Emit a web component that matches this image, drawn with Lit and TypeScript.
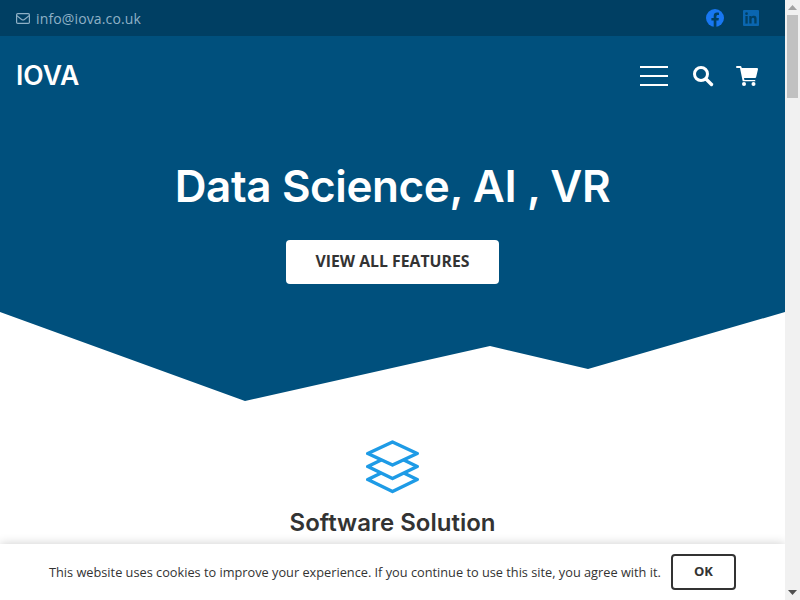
import { LitElement, html, css } from "lit";
import { customElement } from "lit/decorators.js";

@customElement("app-root")
export class AppRoot extends LitElement {
  static styles = css`
    :host { display: block; width: 800px; height: 600px; overflow: hidden; background: #fff; font-family: "Open Sans", sans-serif; color: #333; }
    * { box-sizing: border-box; }
    .shell { display: grid; grid-template-columns: 785px 15px; height: 600px; }
    .page { position: relative; height: 600px; overflow: hidden; }
    .topbar { height: 36px; background: #003f63; display: flex; align-items: center; justify-content: space-between; padding: 0 26px 0 16px; }
    .mail { display: flex; align-items: center; gap: 6px; color: #8fb1c6; font-size: 14px; letter-spacing: 0.14px; }
    .social { display: flex; align-items: center; gap: 19px; }
    .social svg { display: block; }
    .hero { background: #00507d; height: 276px; display: flex; flex-direction: column; }
    .nav { display: flex; align-items: center; justify-content: space-between; height: 80px; padding: 0 27px 0 16px; }
    .logo { font-family: Inter, sans-serif; font-weight: 600; font-size: 26.5px; color: #fff; margin-top: -2px; }
    .tools { display: flex; align-items: center; }
    .burger { display: flex; flex-direction: column; gap: 7px; width: 28px; margin-right: 25px; }
    .burger span { display: block; height: 2px; background: #fff; }
    .search { margin-right: 22px; display: block; }
    .cart { display: block; }
    h1 { margin: 46px 0 0; text-align: center; font-family: Inter, sans-serif; font-weight: 600; font-size: 44px; line-height: 48px; color: #fff; letter-spacing: -0.4px; }
    .cta { align-self: center; margin-top: 30px; width: 213px; height: 44px; padding-bottom: 2px; background: #fff; border-radius: 4px; display: flex; align-items: center; justify-content: center; font-weight: 700; font-size: 15.8px; color: #333; }
    .divider { display: block; width: 785px; height: 89px; }
    .feature { display: flex; flex-direction: column; align-items: center; padding-top: 39px; }
    .feature svg { display: block; }
    h2 { margin: 13px 0 0; font-family: Inter, sans-serif; font-weight: 600; font-size: 24px; line-height: 32px; color: #333; }
    .cookie { position: absolute; left: 0; right: 0; bottom: 0; height: 56px; background: #fff; box-shadow: 0 0 10px rgba(0,0,0,.2); display: flex; align-items: center; padding: 0 49px; gap: 10px; }
    .cookie p { margin: 0; width: 612px; font-size: 12.76px; color: #333; white-space: nowrap; }
    .ok { width: 65px; height: 36px; border: 2px solid #333; border-radius: 4px; display: flex; align-items: center; justify-content: center; font-weight: 700; font-size: 13px; color: #333; flex: none; padding-bottom: 2px; }
    .bar { background: #f1f1f1; display: flex; flex-direction: column; align-items: center; height: 600px; }
    .arrow { height: 15px; display: flex; align-items: center; justify-content: center; flex: none; }
    .thumb { width: 11px; height: 83px; background: #c1c1c1; flex: none; }
    .track { flex: 1; }
  `;

  render() {
    return html`
      <div class="shell">
        <div class="page">
          <div class="topbar">
            <div class="mail">
              <svg width="14" height="11" viewBox="0 0 14 11" fill="none" stroke="#8fb1c6" stroke-width="1.2">
                <rect x=".6" y=".6" width="12.8" height="9.8" rx="1.2"/>
                <path d="M.8 2.6 5.6 6.4q1.4 1 2.8 0l4.8-3.8"/>
              </svg>
              <span>info@iova.co.uk</span>
            </div>
            <div class="social">
              <svg width="18" height="18" viewBox="0 0 18 18">
                <circle cx="9" cy="9" r="9" fill="#1877f2"/>
                <path d="M12.500 11.600 12.900 9H10.400V7.300c0-.7.350-1.400 1.450-1.400H13V3.700s-1-.2-2-.2C9 3.500 7.700 4.700 7.700 6.900V9H5.400v2.600h2.300V18h2.700v-6.400z" fill="#003f63"/>
              </svg>
              <svg width="16" height="16" viewBox="0 0 16 16">
                <rect width="16" height="16" rx="1" fill="#0a66b0"/>
                <rect x="2.400" y="6" width="2.300" height="7.600" fill="#003f63"/>
                <circle cx="3.550" cy="3.700" r="1.350" fill="#003f63"/>
                <path d="M6.300 6h2.200v1c.4-.7 1.300-1.200 2.400-1.200 2.300 0 2.700 1.500 2.700 3.500v4.300h-2.300V9.800c0-.9 0-2-1.300-2s-1.400 1-1.400 2v3.800H6.300z" fill="#003f63"/>
              </svg>
            </div>
          </div>
          <div class="hero">
            <div class="nav">
              <div class="logo">IOVA</div>
              <div class="tools">
                <div class="burger"><span></span><span></span><span></span></div>
                <svg class="search" width="21" height="21" viewBox="0 0 21 21" fill="none" stroke="#fff">
                  <circle cx="8" cy="8" r="6.500" stroke-width="3"/>
                  <path d="M13 13 18.500 18.500" stroke-width="3.400" stroke-linecap="round"/>
                </svg>
                <svg class="cart" width="22" height="20" viewBox="0 0 22 20">
                  <path d="M0 1a1 1 0 0 1 1-1h3.400c.5 0 .9.300 1 .8L5.800 2h15.200c.7 0 1.100.6 1 1.200l-1.900 8c-.1.500-.5.800-1 .8H8l.4 2h10c.7 0 1.100.6 1 1.200H6.700L4 2H1a1 1 0 0 1-1-1z" fill="#fff"/>
                  <circle cx="8" cy="18" r="2" fill="#fff"/>
                  <circle cx="17.500" cy="18" r="2" fill="#fff"/>
                </svg>
              </div>
            </div>
            <h1>Data Science, AI , VR</h1>
            <div class="cta">VIEW ALL FEATURES</div>
          </div>
          <svg class="divider" viewBox="0 0 785 89"><polygon points="0,0 245,89 490,34 588,57 785,0" fill="#00507d"/></svg>
          <div class="feature">
            <svg width="54" height="54" viewBox="0 0 54 54" fill="#fff" stroke="#1e9be6" stroke-width="3.500" stroke-linejoin="round">
              <path d="M1.800 39.500 26.500 27.500 51.200 39.500 26.500 51.500z"/>
              <path d="M1.800 26.500 26.500 14.500 51.200 26.500 26.500 38.500z"/>
              <path d="M1.800 13.500 26.500 2 51.200 13.500 26.500 25z"/>
            </svg>
            <h2>Software Solution</h2>
          </div>
          <div class="cookie">
            <p>This website uses cookies to improve your experience. If you continue to use this site, you agree with it.</p>
            <div class="ok">OK</div>
          </div>
        </div>
        <div class="bar">
          <div class="arrow"><svg width="9" height="5" viewBox="0 0 9 5"><path d="M4.500 0 9 5H0z" fill="#a3a3a3"/></svg></div>
          <div class="thumb"></div>
          <div class="track"></div>
          <div class="arrow"><svg width="9" height="5" viewBox="0 0 9 5"><path d="M0 0h9L4.500 5z" fill="#505050"/></svg></div>
        </div>
      </div>
    `;
  }
}
